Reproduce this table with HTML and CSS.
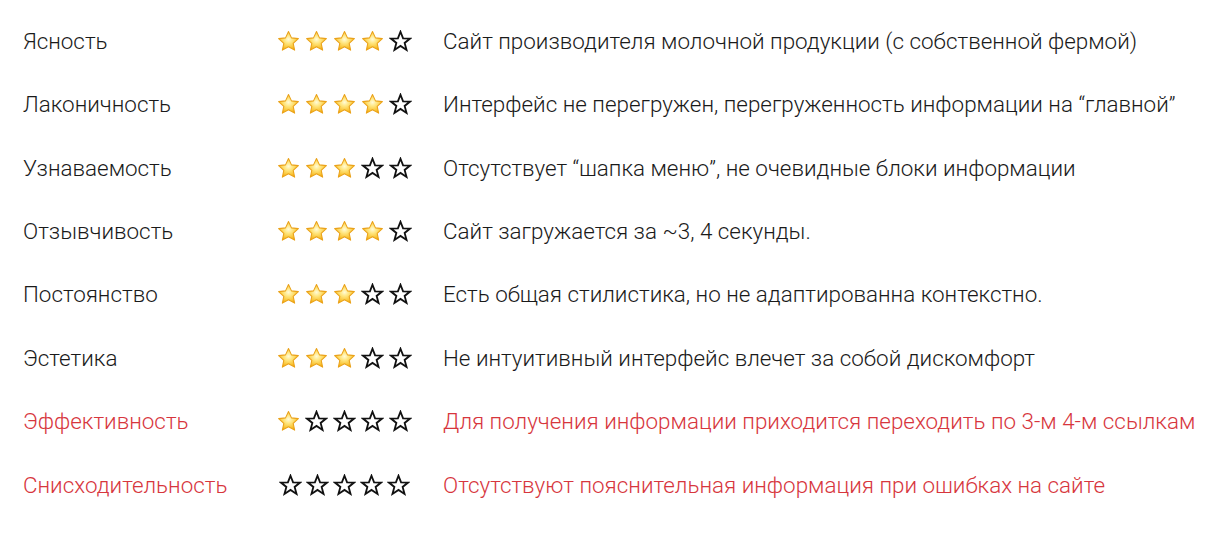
FILE: index.html
```html
<!DOCTYPE html>
<html lang="ru">
<head>
<meta charset="utf-8">
<link rel="stylesheet" href="styles.css">
</head>
<body>
<svg width="0" height="0" class="defs">
  <defs>
    <radialGradient id="gold" cx="50%" cy="42%" r="60%">
      <stop offset="0" stop-color="#fffbd8"/>
      <stop offset="0.35" stop-color="#ffe680"/>
      <stop offset="0.8" stop-color="#f9c12e"/>
      <stop offset="1" stop-color="#f0a20e"/>
    </radialGradient>
    <symbol id="full" viewBox="0 0 24 24">
      <path d="M12 1.6 L15.1 8.2 L22.3 9 L16.9 13.9 L18.4 21 L12 17.4 L5.6 21 L7.1 13.9 L1.7 9 L8.9 8.2 Z" fill="url(#gold)" stroke="#eaa21a" stroke-width="1.1" stroke-linejoin="round"/>
    </symbol>
    <symbol id="empty" viewBox="0 0 24 24">
      <path d="M12 1.8 L14.7 8.7 L22 8.9 L16.3 13.5 L18.3 20.8 L12 16.6 L5.7 20.8 L7.7 13.5 L2 8.9 L9.3 8.7 Z" fill="none" stroke="#111" stroke-width="1.9" stroke-linejoin="miter"/>
    </symbol>
  </defs>
</svg>
<div class="table">
  <div class="row">
    <div class="label">Ясность</div>
    <div class="stars"><svg><use href="#full"/></svg><svg><use href="#full"/></svg><svg><use href="#full"/></svg><svg><use href="#full"/></svg><svg><use href="#empty"/></svg></div>
    <div class="desc">Сайт производителя молочной продукции (с собственной фермой)</div>
  </div>
  <div class="row">
    <div class="label">Лаконичность</div>
    <div class="stars"><svg><use href="#full"/></svg><svg><use href="#full"/></svg><svg><use href="#full"/></svg><svg><use href="#full"/></svg><svg><use href="#empty"/></svg></div>
    <div class="desc">Интерфейс не перегружен, перегруженность информации на “главной”</div>
  </div>
  <div class="row">
    <div class="label">Узнаваемость</div>
    <div class="stars"><svg><use href="#full"/></svg><svg><use href="#full"/></svg><svg><use href="#full"/></svg><svg><use href="#empty"/></svg><svg><use href="#empty"/></svg></div>
    <div class="desc">Отсутствует “шапка меню”, не очевидные блоки информации</div>
  </div>
  <div class="row">
    <div class="label">Отзывчивость</div>
    <div class="stars"><svg><use href="#full"/></svg><svg><use href="#full"/></svg><svg><use href="#full"/></svg><svg><use href="#full"/></svg><svg><use href="#empty"/></svg></div>
    <div class="desc">Сайт загружается за ~3, 4 секунды.</div>
  </div>
  <div class="row">
    <div class="label">Постоянство</div>
    <div class="stars"><svg><use href="#full"/></svg><svg><use href="#full"/></svg><svg><use href="#full"/></svg><svg><use href="#empty"/></svg><svg><use href="#empty"/></svg></div>
    <div class="desc">Есть общая стилистика, но не адаптированна контекстно.</div>
  </div>
  <div class="row">
    <div class="label">Эстетика</div>
    <div class="stars"><svg><use href="#full"/></svg><svg><use href="#full"/></svg><svg><use href="#full"/></svg><svg><use href="#empty"/></svg><svg><use href="#empty"/></svg></div>
    <div class="desc">Не интуитивный интерфейс влечет за собой дискомфорт</div>
  </div>
  <div class="row bad">
    <div class="label">Эффективность</div>
    <div class="stars"><svg><use href="#full"/></svg><svg><use href="#empty"/></svg><svg><use href="#empty"/></svg><svg><use href="#empty"/></svg><svg><use href="#empty"/></svg></div>
    <div class="desc">Для получения информации приходится переходить по 3-м 4-м ссылкам</div>
  </div>
  <div class="row bad">
    <div class="label">Снисходительность</div>
    <div class="stars shift"><svg><use href="#empty"/></svg><svg><use href="#empty"/></svg><svg><use href="#empty"/></svg><svg><use href="#empty"/></svg><svg><use href="#empty"/></svg></div>
    <div class="desc">Отсутствуют пояснительная информация при ошибках на сайте</div>
  </div>
</div>
</body>
</html>
```

FILE: styles.css
```css
html, body {
  margin: 0;
  padding: 0;
  background: #ffffff;
}

body {
  font-family: Roboto, "Liberation Sans", sans-serif;
  font-weight: 300;
  font-size: 22.4px;
  color: #1a1a1a;
}

.defs {
  position: absolute;
  width: 0;
  height: 0;
}

.table {
  display: flex;
  flex-direction: column;
  padding: 9px 0 0 23px;
}

.row {
  display: grid;
  grid-template-columns: 254px 166px 1fr;
  align-items: center;
  height: 63.45px;
}

.row.bad {
  color: #d7363d;
}

.label,
.desc {
  white-space: nowrap;
}

.stars {
  display: flex;
  gap: 5px;
  align-items: center;
  padding-top: 1px;
}

.stars.shift {
  padding-left: 2px;
  gap: 4px;
}

.stars svg {
  width: 23px;
  height: 23px;
  display: block;
}
```
